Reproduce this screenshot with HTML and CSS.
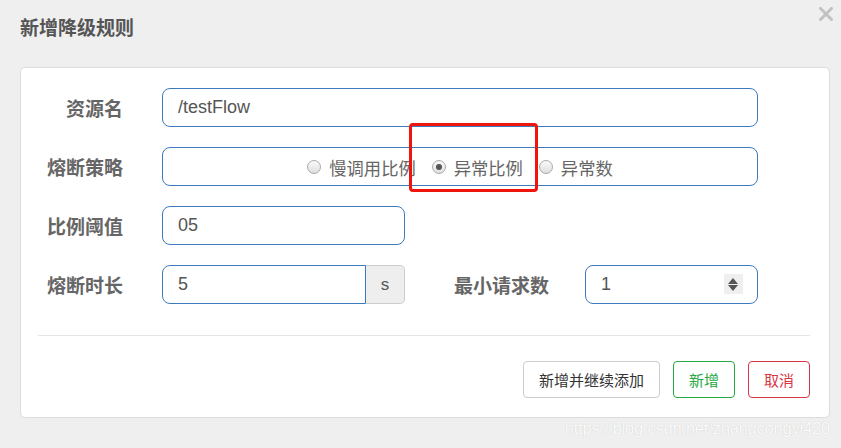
FILE: index.html
```html
<!DOCTYPE html>
<html lang="zh">
<head>
<meta charset="utf-8">
<link rel="stylesheet" href="styles.css">
</head>
<body>
<div class="dialog">
  <div class="header">
    <h4 class="title">新增降级规则</h4>
    <span class="close"><svg width="14" height="14" viewBox="0 0 14 14"><path d="M1.5 1.5L12.5 12.5M12.5 1.5L1.5 12.5" stroke="#c2c2c2" stroke-width="3" stroke-linecap="square"/></svg></span>
  </div>
  <div class="card">
    <div class="row">
      <label class="label">资源名</label>
      <div class="input wide">/testFlow</div>
    </div>
    <div class="row">
      <label class="label">熔断策略</label>
      <div class="input wide radios">
        <span class="radio"><span class="dot"></span>慢调用比例</span>
        <span class="radio"><span class="dot checked"></span>异常比例</span>
        <span class="radio"><span class="dot"></span>异常数</span>
      </div>
    </div>
    <div class="row">
      <label class="label">比例阈值</label>
      <div class="input half">05</div>
    </div>
    <div class="row">
      <label class="label">熔断时长</label>
      <div class="group">
        <div class="input grouped">5</div>
        <span class="addon">s</span>
      </div>
      <label class="label label2">最小请求数</label>
      <div class="input number">1<span class="spin"><span class="up"></span><span class="down"></span></span></div>
    </div>
    <div class="divider"></div>
    <div class="footer">
      <button class="btn btn-default">新增并继续添加</button>
      <button class="btn btn-success">新增</button>
      <button class="btn btn-danger">取消</button>
    </div>
  </div>
  <div class="highlight"></div>
  <div class="watermark">https://blog.csdn.net/zhangcongyi420</div>
</div>
</body>
</html>
```
FILE: styles.css
```css
html, body {
  margin: 0;
  padding: 0;
}
body {
  background: #efefef;
  font-family: "Liberation Sans", "Noto Sans CJK SC", sans-serif;
  width: 841px;
  height: 448px;
  overflow: hidden;
}
.dialog {
  position: relative;
  width: 841px;
  height: 448px;
}
.header {
  position: relative;
  height: 67px;
  padding: 0 20px;
  box-sizing: border-box;
}
.title {
  margin: 0;
  padding-top: 14px;
  font-size: 19px;
  line-height: 25px;
  font-weight: bold;
  color: #555;
  font-family: "Noto Sans CJK SC", sans-serif;
}
.close {
  position: absolute;
  right: 8px;
  top: 7px;
  width: 14px;
  height: 14px;
  display: block;
}
.close svg { display: block; }
.card {
  margin-left: 20px;
  width: 810px;
  height: 351px;
  box-sizing: border-box;
  background: #fff;
  border: 1px solid #dcdcdc;
  border-radius: 5px;
  padding-top: 20px;
}
.row {
  display: flex;
  align-items: center;
  height: 39px;
  margin-bottom: 20px;
}
.label {
  width: 102px;
  flex: none;
  text-align: right;
  font-family: "Noto Sans CJK SC", sans-serif;
  font-weight: bold;
  font-size: 19px;
  color: #666;
  margin-right: 39px;
}
.label2 {
  width: 144px;
  margin-right: 36px;
}
.input {
  height: 39px;
  box-sizing: border-box;
  border: 1px solid #3b7bbd;
  border-radius: 8px;
  padding-left: 15px;
  font-size: 18px;
  line-height: 37px;
  color: #555;
  flex: none;
  position: relative;
}
.wide { width: 596px; }
.half { width: 243px; }
.radios {
  display: flex;
  justify-content: center;
  align-items: center;
  padding-left: 0;
  padding-top: 2px;
  font-family: "Noto Sans CJK SC", sans-serif;
  font-size: 17.3px;
  color: #666;
  gap: 16px;
}
.radio {
  display: flex;
  align-items: center;
  gap: 8px;
}
.dot {
  width: 12px;
  height: 12px;
  border-radius: 50%;
  border: 1px solid #aaa;
  background: linear-gradient(#fafafa, #dedede);
  position: relative;
  margin-top: -2px;
}
.dot.checked::after {
  content: "";
  position: absolute;
  left: 3px;
  top: 3px;
  width: 6px;
  height: 6px;
  border-radius: 50%;
  background: #555;
}
.group {
  display: flex;
  width: 243px;
  flex: none;
}
.grouped {
  width: 204px;
  border-radius: 8px 0 0 8px;
}
.addon {
  width: 39px;
  height: 39px;
  box-sizing: border-box;
  background: #eee;
  border: 1px solid #ccc;
  border-left: none;
  border-radius: 0 5px 5px 0;
  text-align: center;
  line-height: 37px;
  font-size: 17px;
  color: #555;
}
.number {
  width: 173px;
}
.spin {
  position: absolute;
  left: 138px;
  top: 8px;
  width: 19px;
  height: 20px;
  background: #efefef;
}
.up, .down {
  position: absolute;
  left: 4px;
  width: 0;
  height: 0;
  border-left: 5.5px solid transparent;
  border-right: 5.5px solid transparent;
}
.up {
  top: 4px;
  border-bottom: 6px solid #555;
}
.down {
  top: 11px;
  border-top: 6px solid #555;
}
.divider {
  margin: 31px 19px 0 17px;
  height: 1px;
  background: #e5e5e5;
}
.footer {
  display: flex;
  justify-content: flex-end;
  gap: 13px;
  padding: 25px 19px 0 0;
}
.btn {
  height: 37px;
  box-sizing: border-box;
  background: #fff;
  border: 1px solid #ccc;
  border-radius: 4px;
  font-family: "Noto Sans CJK SC", sans-serif;
  font-size: 15px;
  padding: 0;
  color: #333;
}
.btn-default { width: 137px; }
.btn-success { width: 62px; color: #28a745; border-color: #28a745; }
.btn-danger { width: 62px; color: #dc3545; border-color: #dc3545; }
.highlight {
  position: absolute;
  left: 409px;
  top: 123px;
  width: 129px;
  height: 69px;
  box-sizing: border-box;
  border: 3px solid #f0140f;
  border-radius: 4px;
}
.watermark {
  position: absolute;
  right: 11px;
  top: 418px;
  font-family: "Liberation Sans", sans-serif;
  font-size: 16.5px;
  line-height: 20px;
  color: #fbfbfb;
  text-shadow: 0 0 1px #c4c4c4;
  letter-spacing: -0.2px;
}
```
